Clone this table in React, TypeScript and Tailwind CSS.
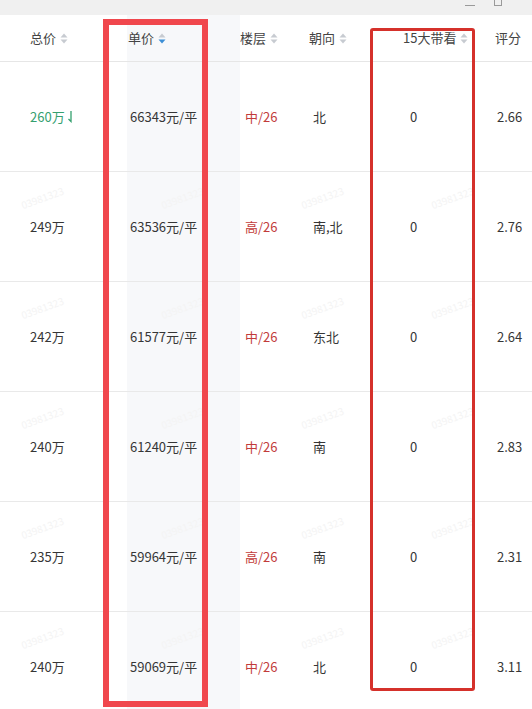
import React from "react";

const font = { fontFamily: '"Microsoft YaHei","Noto Sans CJK SC","Noto Sans",sans-serif' };

function SortIcon({ active }: { active?: boolean }) {
  return (
    <svg width="8" height="11" viewBox="0 0 8 11" className="ml-[4px]">
      <path d="M4 0.5 L7.5 4.5 L0.5 4.5 Z" fill="#c7cbd1" />
      <path d="M4 10.5 L7.5 6.5 L0.5 6.5 Z" fill={active ? "#3d8fd6" : "#c7cbd1"} />
    </svg>
  );
}

const rows = [
  { total: "260万", down: true, unit: "66343元/平", floor: "中/26", dir: "北", look: "0", score: "2.66" },
  { total: "249万", unit: "63536元/平", floor: "高/26", dir: "南,北", look: "0", score: "2.76" },
  { total: "242万", unit: "61577元/平", floor: "中/26", dir: "东北", look: "0", score: "2.64" },
  { total: "240万", unit: "61240元/平", floor: "中/26", dir: "南", look: "0", score: "2.83" },
  { total: "235万", unit: "59964元/平", floor: "高/26", dir: "南", look: "0", score: "2.31" },
  { total: "240万", unit: "59069元/平", floor: "中/26", dir: "北", look: "0", score: "3.11" },
];

const rowTops = [172, 282, 392, 502, 612];
const cols = [20, 160, 300, 430];
const watermarks: [number, number][] = [];
rowTops.forEach((t) => cols.forEach((x) => watermarks.push([x, t + 18])));

export default function App() {
  return (
    <div className="relative w-[532px] h-[709px] overflow-hidden bg-white text-[13px] text-[#363636]" style={font}>
      {/* title bar */}
      <div className="h-[15px] bg-[#f0f0f0] flex items-start justify-end">
        <div className="w-[10px] h-[1px] bg-[#9a9a9a] mt-[5px] mr-[19px]" />
        <div className="w-[8px] h-[8px] border border-[#9a9a9a] -mt-[2px] mr-[30px]" />
      </div>

      <div className="flex">
        {/* column 1 */}
        <div className="w-[127px]">
          <div className="h-[47px] border-b border-[#e6e6e6] flex items-center pl-[30px] text-[#444]">
            总价<SortIcon />
          </div>
          {rows.map((r, i) => (
            <div key={i} className="h-[110px] border-b border-[#e9e9e9] flex items-center pl-[30px]">
              <span className={r.down ? "text-[#35a06f]" : ""}>{r.total}</span>
              {r.down && (
                <svg width="6" height="13" viewBox="0 0 6 13" className="ml-[2px]">
                  <path d="M4 1 V11.5 L1.5 9" stroke="#35a06f" strokeWidth="1.3" fill="none" />
                </svg>
              )}
            </div>
          ))}
        </div>
        {/* column 2 sorted */}
        <div className="w-[113px] bg-[#f7f8fa]">
          <div className="h-[47px] border-b border-[#e6e6e6] flex items-center pl-[1px] text-[#444]">
            单价<SortIcon active />
          </div>
          {rows.map((r, i) => (
            <div key={i} className="h-[110px] border-b border-[#e9e9e9] flex items-center pl-[3px]">
              {r.unit}
            </div>
          ))}
        </div>
        {/* column 3 */}
        <div className="w-[66px]">
          <div className="h-[47px] border-b border-[#e6e6e6] flex items-center text-[#444]">
            楼层<SortIcon />
          </div>
          {rows.map((r, i) => (
            <div key={i} className="h-[110px] border-b border-[#e9e9e9] flex items-center pl-[5px] text-[#c23b3b]">
              {r.floor}
            </div>
          ))}
        </div>
        {/* column 4 */}
        <div className="w-[94px]">
          <div className="h-[47px] border-b border-[#e6e6e6] flex items-center pl-[3px] text-[#444]">
            朝向<SortIcon />
          </div>
          {rows.map((r, i) => (
            <div key={i} className="h-[110px] border-b border-[#e9e9e9] flex items-center pl-[7px]">
              {r.dir}
            </div>
          ))}
        </div>
        {/* column 5 */}
        <div className="w-[92px]">
          <div className="h-[47px] border-b border-[#e6e6e6] flex items-center pl-[3px] text-[#444]">
            15大带看<SortIcon />
          </div>
          {rows.map((r, i) => (
            <div key={i} className="h-[110px] border-b border-[#e9e9e9] flex items-center pl-[10px]">
              {r.look}
            </div>
          ))}
        </div>
        {/* column 6 */}
        <div className="flex-1 whitespace-nowrap">
          <div className="h-[47px] border-b border-[#e6e6e6] flex items-center pl-[3px] text-[#444]">
            评分
          </div>
          {rows.map((r, i) => (
            <div key={i} className="h-[110px] border-b border-[#e9e9e9] flex items-center pl-[5px]">
              {r.score}
            </div>
          ))}
        </div>
      </div>

      {/* faint watermarks */}
      {watermarks.map(([x, y], i) => (
        <div
          key={i}
          className="absolute text-[10px] text-[#f4f4f4] -rotate-[20deg] pointer-events-none"
          style={{ left: x, top: y }}
        >
          03981323
        </div>
      ))}

      {/* annotation boxes */}
      <div className="absolute left-[103px] top-[19px] w-[105px] h-[688px] border-[6px] border-[#f0474d] pointer-events-none" />
      <div className="absolute left-[370px] top-[28px] w-[105px] h-[663px] border-[3px] border-[#d5312b] rounded-[3px] pointer-events-none" />
    </div>
  );
}
